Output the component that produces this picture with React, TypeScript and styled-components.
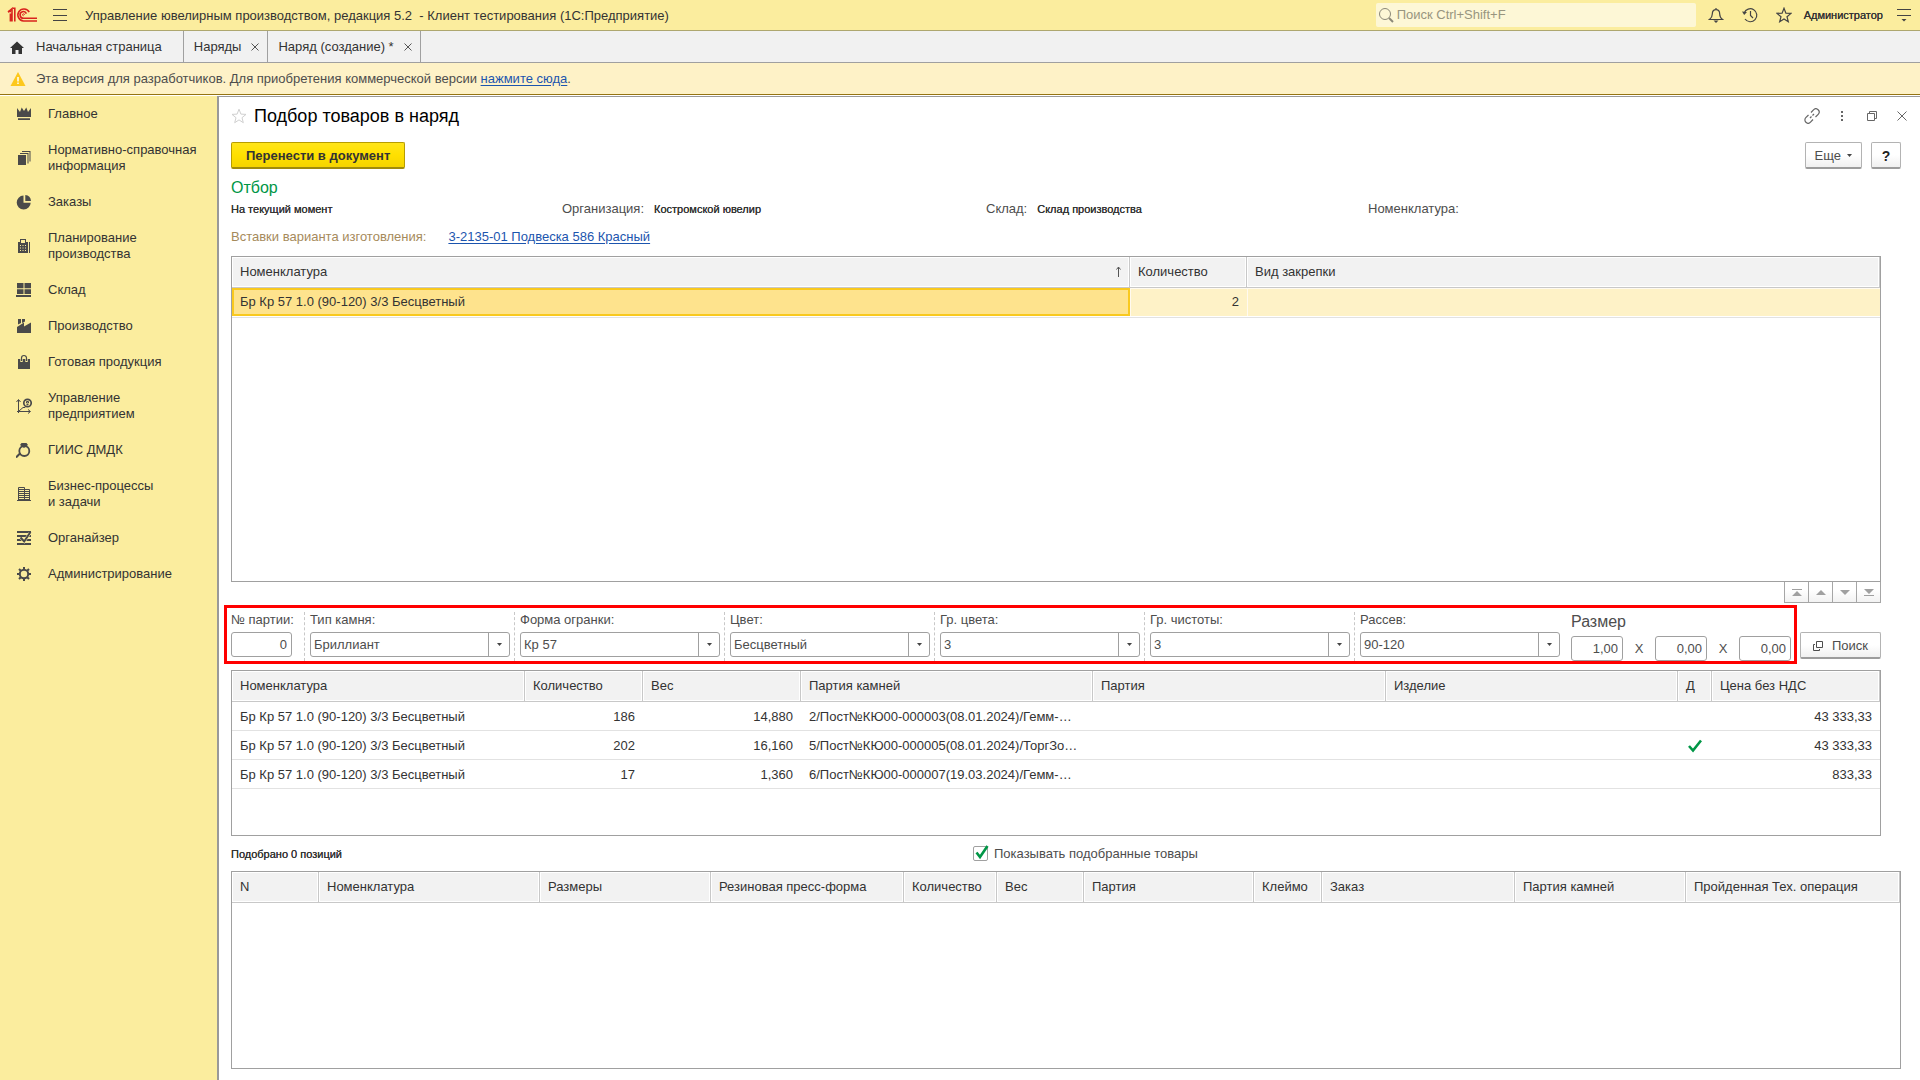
import React, { useId, useState } from 'react';
import styled, { createGlobalStyle } from 'styled-components';

const GlobalStyle = createGlobalStyle`
  *, *::before, *::after { box-sizing: border-box; }
  body { margin: 0; background: #fff; }
  body, button, input, select {
    font-family: "Liberation Sans", Arial, sans-serif;
    font-size: 13px;
    line-height: 16px;
    color: #333;
  }
  button { margin: 0; padding: 0; border: 0; background: none; cursor: pointer; }
`;

const Page = styled.div`
  display: flex;
  flex-direction: column;
  min-height: 100vh;
`;

const Row = styled.div<{ $gap?: number }>`
  display: flex;
  align-items: center;
  gap: ${(p) => p.$gap ?? 0}px;
`;

/* ---------- top bars ---------- */

const TopBar = styled.header`
  display: flex;
  align-items: center;
  height: 31px;
  padding: 0 8px 0 7px;
  background: #fbed9e;
  border-bottom: 1px solid #aea76f;
`;

const AppTitle = styled.div`
  flex: 1;
  margin-left: 17px;
  padding-top: 2px;
  white-space: pre;
`;

const IconButton = styled.button`
  display: flex;
  align-items: center;
  justify-content: center;
  width: 16px;
  height: 16px;
  color: #444;
`;

const SearchBox = styled.label`
  display: flex;
  align-items: center;
  gap: 3px;
  width: 320px;
  height: 24px;
  padding: 0 2px;
  margin-right: 12px;
  border-radius: 2px;
  background: #fdf7d6;
  color: #8b8878;
`;

const SearchInput = styled.input`
  flex: 1;
  min-width: 0;
  padding: 0;
  border: 0;
  outline: 0;
  background: none;
  &::placeholder { color: #98957f; opacity: 1; }
`;

const UserName = styled.button`
  margin: 0 13px 0 12px;
  font-size: 11px;
  text-shadow: 0 0 0 currentColor;
`;

const TabBar = styled.nav`
  display: flex;
  height: 32px;
  background: #f1f1f1;
  border-bottom: 1px solid #a0a0a0;
`;

const Tab = styled.div<{ $home?: boolean }>`
  display: flex;
  align-items: center;
  gap: ${(p) => (p.$home ? 12 : 10)}px;
  padding: ${(p) => (p.$home ? '0 21px 0 10px' : '0 8px 0 10px')};
  border-right: 1px solid #a0a0a0;
`;

const TabClose = styled.button`
  display: flex;
  width: 8px;
  color: #555;
`;

const Banner = styled.div`
  display: flex;
  align-items: center;
  gap: 10px;
  height: 32px;
  padding: 0 10px;
  background: #fef2c7;
  border-bottom: 1px solid #957412;
  color: #4d4d4d;
`;

const Link = styled.a`
  color: #1c55ae;
  text-decoration: underline;
  text-underline-offset: 2px;
`;

/* ---------- body ---------- */

const Body = styled.div`
  display: flex;
  flex: 1;
  padding-top: 1px;
`;

const Sidebar = styled.nav`
  width: 217px;
  flex: none;
  background: #fbed9e;
`;

const SideItem = styled.button`
  display: flex;
  align-items: center;
  gap: 16px;
  width: 100%;
  padding: 10px 8px 10px 16px;
  text-align: left;
  white-space: pre-line;
  & svg { flex: none; color: #4a4a4a; }
`;

const Main = styled.main`
  display: flex;
  flex: 1;
  flex-direction: column;
  min-width: 0;
  padding: 0 19px 11px 12px;
  border-top: 1px solid #999;
  border-left: 2px solid #999;
`;

const TitleRow = styled.div`
  display: flex;
  align-items: center;
  height: 38px;
`;

const Title = styled.h1`
  flex: 1;
  margin: 0 0 0 7px;
  font-size: 18px;
  line-height: 22px;
  font-weight: 400;
  color: #000;
`;

const WindowTools = styled.div`
  display: flex;
  gap: 14px;
  margin-right: -9px;
  & button { color: #666; }
`;

const CommandBar = styled.div`
  display: flex;
  gap: 9px;
  margin-top: 7px;
`;

const Button = styled.button<{ $primary?: boolean }>`
  display: flex;
  align-items: center;
  justify-content: center;
  gap: 6px;
  height: 27px;
  padding: ${(p) => (p.$primary ? '1px 14px 0' : '1px 9px 0')};
  border: 1px solid ${(p) => (p.$primary ? '#b79d00' : '#b3b3b3')};
  border-bottom: 2px solid ${(p) => (p.$primary ? '#a08b0c' : '#9c9c9c')};
  border-radius: 2px;
  background: ${(p) =>
    p.$primary
      ? 'linear-gradient(#ffe51a, #ffe000 50%, #f5d400)'
      : 'linear-gradient(#fff 50%, #f0f0f0)'};
  color: ${(p) => (p.$primary ? '#333' : '#4d4d4d')};
  font-weight: ${(p) => (p.$primary ? 700 : 400)};
`;

const HelpButton = styled(Button)`
  width: 30px;
  padding: 1px 0 0;
  font-weight: 700;
  font-size: 14px;
  color: #222;
`;

const Spacer = styled.div`
  flex: 1;
`;

const SectionTitle = styled.h2`
  margin: 9px 0 3px;
  font-size: 16px;
  line-height: 20px;
  font-weight: 400;
  color: #009646;
`;

const Facts = styled.dl`
  display: grid;
  grid-template-columns: 331fr 424fr 382fr 533fr;
  margin: 0;
  color: #4d4d4d;
`;

const Fact = styled.div`
  display: flex;
  gap: 10px;
  & dt, & dd { margin: 0; }
`;

const Strong = styled.span`
  font-size: 11px;
  color: #333;
  text-shadow: 0 0 0 currentColor;
`;

const VariantRow = styled.div`
  display: flex;
  gap: 22px;
  margin: 12px 0 11px;
  color: #a68a5b;
`;

/* ---------- tables ---------- */

const TablePanel = styled.div<{ $size: number; $wide?: boolean }>`
  flex: ${(p) => p.$size} 0 ${(p) => p.$size}px;
  margin-right: ${(p) => (p.$wide ? 0 : 20)}px;
  border: 1px solid #a0a0a0;
  overflow: hidden;
`;

const Table = styled.table`
  width: 100%;
  table-layout: fixed;
  border-collapse: separate;
  border-spacing: 0;
`;

const Th = styled.th`
  height: 31px;
  padding: 0 8px;
  border-right: 1px solid #c8c8c8;
  border-bottom: 1px solid #c8c8c8;
  background: #f2f2f2;
  box-shadow: inset 0 0 0 1px #fff;
  font-weight: 400;
  text-align: left;
  white-space: nowrap;
`;

const HeadLabel = styled.div`
  display: flex;
  justify-content: space-between;
  align-items: center;
`;

const Td = styled.td<{ $right?: boolean; $tone?: 'row' | 'cell' }>`
  height: ${(p) => (p.$tone ? 28 : 29)}px;
  padding: ${(p) => (p.$tone === 'cell' ? '0 6px' : p.$tone ? '0 8px' : '1px 8px 0')};
  border: ${(p) => (p.$tone === 'cell' ? '2px solid #f9c91f' : '0')};
  border-bottom: ${(p) => (p.$tone === 'cell' ? '2px solid #f9c91f' : p.$tone ? '0' : '1px solid #e2e2e2')};
  background: ${(p) => (p.$tone === 'cell' ? '#fee38d' : p.$tone ? '#fef2c7' : 'none')};
  box-shadow: ${(p) => (p.$tone === 'row' ? 'inset 1px 1px 0 #fffaf0' : 'none')};
  text-align: ${(p) => (p.$right ? 'right' : 'left')};
  white-space: nowrap;
  overflow: hidden;
  & svg { display: block; margin: 0 auto; }
`;

const RowRule = styled.tr`
  & td { height: 2px; padding: 0; border-bottom: 1px solid #e2e2e2; }
`;

const Pager = styled.div`
  display: flex;
  justify-content: flex-end;
  margin: 0 20px 2px 0;
`;

const PagerButton = styled.button`
  display: flex;
  align-items: center;
  justify-content: center;
  width: 25px;
  height: 21px;
  margin-left: -1px;
  border: 1px solid #a6a6a6;
  border-top: 0;
  background: linear-gradient(#fff 40%, #f2f2f2);
  color: #a0a0a0;
`;

/* ---------- stone filter ---------- */

const FilterRow = styled.div`
  display: flex;
  align-items: flex-start;
  gap: 3px;
  margin: 0 20px 6px -7px;
`;

const FilterFrame = styled.div`
  display: flex;
  flex: 1;
  min-width: 0;
  padding: 4px 3px 0 4px;
  border: 3px solid #f00;
  color: #4d4d4d;
`;

const Field = styled.div<{ $fixed?: boolean }>`
  display: flex;
  flex-direction: column;
  gap: 4px;
  flex: ${(p) => (p.$fixed ? '0 0 73px' : '1 1 0')};
  min-width: 0;
  padding: ${(p) => (p.$fixed ? '0 12px 4px 0' : '0 4px 4px 5px')};
  border-left: ${(p) => (p.$fixed ? '0' : '1px dashed #c8c8c8')};
  white-space: nowrap;
`;

const TextInput = styled.input`
  width: 100%;
  height: 25px;
  padding: 0 4px;
  border: 1px solid #a0a0a0;
  border-radius: 3px;
  outline: 0;
  color: #4d4d4d;
  text-align: right;
`;

const SelectShell = styled.div`
  display: grid;
  & > * { grid-area: 1 / 1; }
`;

const Select = styled.select`
  appearance: none;
  width: 100%;
  height: 25px;
  padding: 0 24px 0 3px;
  border: 1px solid #a0a0a0;
  border-radius: 3px;
  outline: 0;
  background: #fff;
  color: #4d4d4d;
`;

const SelectArrow = styled.span`
  display: flex;
  align-items: center;
  justify-content: center;
  justify-self: end;
  width: 22px;
  border-left: 1px solid #a0a0a0;
  pointer-events: none;
`;

const SizeGroup = styled.fieldset`
  display: flex;
  flex-direction: column;
  gap: 4px;
  width: 220px;
  margin: 0 0 0 7px;
  padding: 0;
  border: 0;
`;

const SizeTitle = styled.span`
  font-size: 16px;
  line-height: 20px;
`;

const SizeInputs = styled.div`
  display: grid;
  grid-template-columns: 52px 32px 52px 32px 52px;
  align-items: center;
  justify-items: center;
`;

const SearchButton = styled(Button)`
  gap: 9px;
  width: 81px;
  margin-top: 27px;
`;

/* ---------- footer of the picker ---------- */

const PickedRow = styled.div`
  display: grid;
  grid-template-columns: 742fr 928fr;
  align-items: center;
  height: 35px;
`;

const CheckLabel = styled.label`
  display: flex;
  align-items: center;
  gap: 6px;
  color: #4d4d4d;
`;

const CheckShell = styled.span`
  display: grid;
  width: 15px;
  & > * { grid-area: 1 / 1; }
  & svg { overflow: visible; pointer-events: none; }
`;

const Checkbox = styled.input`
  appearance: none;
  width: 15px;
  height: 15px;
  margin: 0;
  border: 1px solid #a0a0a0;
  border-radius: 2px;
  background: #fff;
`;

/* ---------- drawings ---------- */

const Svg = ({ size = 16, line, children }: { size?: number; line?: number; children: React.ReactNode }) => (
  <svg
    width={size}
    height={size}
    viewBox={`0 0 ${size} ${size}`}
    fill={line ? 'none' : 'currentColor'}
    stroke={line ? 'currentColor' : 'none'}
    strokeWidth={line}
    aria-hidden="true"
  >
    {children}
  </svg>
);

const Logo = () => (
  <svg width="31" height="16" viewBox="0 0 31 16" fill="none" stroke="#d9231d" strokeWidth="1.6" aria-hidden="true">
    <path d="M1 5.2 5 1.8v12.7M3.4 6.5v8" />
    <path d="M5.6 1.2h2.2v13.4M1 4.5h3" />
    <path d="M22.2 5.2A6 6 0 1 0 16.5 14H30" />
    <path d="M19.4 6.6A3.3 3.3 0 1 0 16.6 11.2H30" />
    <path d="M17.6 7.7a1 1 0 1 0-1 1.1" strokeWidth="1" />
  </svg>
);

const StarPath = 'M8 1.2l1.9 4.9 5.1.3-4 3.3 1.3 5L8 11.9l-4.3 2.8 1.3-5-4-3.3 5.1-.3z';

const Cross = ({ size }: { size: number }) => (
  <Svg size={size} line={1}>
    <path d={`M.5.5l${size - 1} ${size - 1}M${size - 0.5}.5L.5 ${size - 0.5}`} />
  </Svg>
);

const Check = () => (
  <svg width="14" height="14" viewBox="0 0 14 14" fill="none" stroke="#009646" strokeWidth="2.6" aria-hidden="true">
    <path d="M1 7l4 4.5L13 1.500" />
  </svg>
);

const Caret = () => (
  <svg width="5" height="3" viewBox="0 0 5 3" fill="#444" aria-hidden="true">
    <path d="M0 0h5L2.5 3z" />
  </svg>
);

const Windows = () => (
  <Svg size={10} line={1}>
    <path d="M3.5 .5h6v6h-6zM2 3.5H.5v6h6V8" />
  </Svg>
);

const icons: Record<string, React.ReactNode> = {
  crown: (
    <Svg><path d="M1 2l3 4L5.700 1.500 8 5l2.300-3.500L12 6l3-4v9H1zM2 12.300h12V14H2z" /></Svg>
  ),
  docs: (
    <Svg><path d="M2 5h8v10H2zM4 3h8.500v10.500h-1V4H4zM6 1h8.500v10.500h-1V2H6z" /></Svg>
  ),
  pie: (
    <Svg><path d="M7.500 1.500v7.200h7.200A7 7 0 1 1 7.500 1.500zM9.300 1a6.500 6.500 0 0 1 5.700 5.900H9.300z" /></Svg>
  ),
  calc: (
    <Svg>
      <path fillRule="evenodd" d="M4 1h6v3h2v11H2V4h2zM5 2v3h4V2zM4 7v1h1V7zM6.500 7v1h1V7zM9 7v1h1V7zM4 9.500v1h1v-1zM6.500 9.500v1h1v-1zM9 9.500v1h1v-1zM4 12v1h1v-1zM6.500 12v1h1v-1zM9 12v1h1v-1zM13 4h1v11h-1z" />
    </Svg>
  ),
  store: (
    <Svg><path d="M1 1h6.500v5.300H1zM8.500 1H15v5.300H8.500zM1 7.300h6.500v4.700H1zM8.500 7.300H15v4.700H8.500zM0 13h15v2H0z" /></Svg>
  ),
  factory: (
    <Svg><path d="M2 1h3v4L2 6.500zM6 1h3v2.500L6 5zM1 15V9l7-4.500V8.500L15 4.500V15z" /></Svg>
  ),
  bag: (
    <Svg>
      <path d="M2 5h12v10H2z" />
      <path d="M5.500 8V4a2.500 2.500 0 0 1 5 0v4" fill="none" stroke="#fbed9e" strokeWidth="2.400" />
      <path d="M5.500 7V4a2.500 2.500 0 0 1 5 0v3" fill="none" stroke="currentColor" strokeWidth="1.200" />
    </Svg>
  ),
  chart: (
    <Svg line={1}>
      <path d="M2.500 15V2M.5 4l2-2.500 2 2.500M1 13.500h13M12 11.500l2.500 2-2.500 2M3 13l4-3.500 2 0 2-2" />
      <circle cx="11.500" cy="5" r="3.700" strokeWidth="1.700" />
      <path d="M10.500 3.500h2v1.500h-2zM10.500 6.500h2" />
    </Svg>
  ),
  ring: (
    <Svg>
      <path d="M5.500 1h5l1.500 2L8 6 4 3z" />
      <circle cx="8.300" cy="9" r="5" fill="none" stroke="currentColor" strokeWidth="1.800" />
      <path d="M0 15.500l4.500-4.500" stroke="currentColor" strokeWidth="2" />
    </Svg>
  ),
  building: (
    <Svg line={1}>
      <path d="M2.500 14V1.500h6V14M9 3.500h4.500V14M1 14.500h14" />
      <path d="M3 3.500h5M3 5.500h5M3 7.500h5M3 9.500h5M3 11.500h5M3 13.500h5M9 5.500h4M9 7.500h4M9 9.500h4M9 11.500h4M9 13.500h4" />
    </Svg>
  ),
  lines: (
    <Svg>
      <path d="M1 1h14v2H1zM1 5h14v2H1zM1 9h14v2H1zM1 13h14v2H1z" />
      <path d="M5 8l3.200 3.300L14 3" fill="none" stroke="#fbed9e" strokeWidth="3" />
      <path d="M4.500 7.500l3.700 4L14.500 2" fill="none" stroke="currentColor" strokeWidth="2" />
    </Svg>
  ),
  gear: (
    <Svg line={2}>
      <circle cx="8" cy="8" r="4.200" />
      <path d="M8 1v2.500M8 12.500V15M1 8h2.500M12.500 8H15M3 3l1.800 1.800M11.200 11.200L13 13M13 3l-1.800 1.800M4.800 11.200L3 13" />
    </Svg>
  ),
};

/* ---------- data ---------- */

const sections: [string, string][] = [
  ['crown', 'Главное'],
  ['docs', 'Нормативно-справочная\nинформация'],
  ['pie', 'Заказы'],
  ['calc', 'Планирование\nпроизводства'],
  ['store', 'Склад'],
  ['factory', 'Производство'],
  ['bag', 'Готовая продукция'],
  ['chart', 'Управление\nпредприятием'],
  ['ring', 'ГИИС ДМДК'],
  ['building', 'Бизнес-процессы\nи задачи'],
  ['lines', 'Органайзер'],
  ['gear', 'Администрирование'],
];

const filters: [string, string][] = [
  ['Тип камня:', 'Бриллиант'],
  ['Форма огранки:', 'Кр 57'],
  ['Цвет:', 'Бесцветный'],
  ['Гр. цвета:', '3'],
  ['Гр. чистоты:', '3'],
  ['Рассев:', '90-120'],
];

type Column = [string, number];

const insertColumns: Column[] = [['Номенклатура', 898], ['Количество', 117], ['Вид закрепки', 633]];

const stockColumns: Column[] = [
  ['Номенклатура', 293], ['Количество', 118], ['Вес', 158], ['Партия камней', 292],
  ['Партия', 293], ['Изделие', 292], ['Д', 34], ['Цена без НДС', 168],
];

const pickedColumns: Column[] = [
  ['N', 87], ['Номенклатура', 221], ['Размеры', 171], ['Резиновая пресс-форма', 193],
  ['Количество', 93], ['Вес', 87], ['Партия', 170], ['Клеймо', 68], ['Заказ', 193],
  ['Партия камней', 171], ['Пройденная Тех. операция', 214],
];

const STONE = 'Бр Кр 57 1.0 (90-120) 3/3 Бесцветный';

const stock = [
  { qty: '186', weight: '14,880', lot: '2/Пост№КЮ00-000003(08.01.2024)/Гемм-…', ok: false, price: '43 333,33' },
  { qty: '202', weight: '16,160', lot: '5/Пост№КЮ00-000005(08.01.2024)/ТоргЗо…', ok: true, price: '43 333,33' },
  { qty: '17', weight: '1,360', lot: '6/Пост№КЮ00-000007(19.03.2024)/Гемм-…', ok: false, price: '833,33' },
];

/* ---------- parts ---------- */

const TableHead = ({ columns, sorted }: { columns: Column[]; sorted?: boolean }) => (
  <>
    <colgroup>
      {columns.map(([name, width]) => <col key={name} width={width} />)}
    </colgroup>
    <thead>
      <tr>
        {columns.map(([name], i) => (
          <Th key={name} scope="col">
            <HeadLabel>
              {name}
              {sorted && i === 0 && (
                <svg width="5" height="12" viewBox="0 0 5 12" fill="none" stroke="#555" aria-hidden="true">
                  <path d="M2.500 11V1M.5 3.500l2-2.500 2 2.500" />
                </svg>
              )}
            </HeadLabel>
          </Th>
        ))}
      </tr>
    </thead>
  </>
);

const FilterSelect = ({ label, value }: { label: string; value: string }) => {
  const id = useId();
  return (
    <Field>
      <label htmlFor={id}>{label}</label>
      <SelectShell>
        <Select id={id} defaultValue={value}>
          <option>{value}</option>
        </Select>
        <SelectArrow><Caret /></SelectArrow>
      </SelectShell>
    </Field>
  );
};

const pagerShapes: [string, string][] = [
  ['В начало', 'M0 0h10v1H0zM5 2l5 5H0z'],
  ['Вверх', 'M5 1l5 5H0z'],
  ['Вниз', 'M0 1h10L5 6z'],
  ['В конец', 'M0 0h10L5 5zM0 6h10v1H0z'],
];

export default function App() {
  const [showPicked, setShowPicked] = useState(true);

  return (
    <Page>
      <GlobalStyle />
      <TopBar>
        <Row $gap={14}>
          <Logo />
          <IconButton aria-label="Меню">
            <Svg line={1}><path d="M1 2.500h14M1 8.500h14M1 13.500h14" /></Svg>
          </IconButton>
        </Row>
        <AppTitle>{'Управление ювелирным производством, редакция 5.2  - Клиент тестирования (1С:Предприятие)'}</AppTitle>
        <SearchBox>
          <Svg line={1}><circle cx="7" cy="7" r="5.500" /><path d="M11 11l4 4" strokeWidth="2" /></Svg>
          <SearchInput type="search" placeholder="Поиск Ctrl+Shift+F" aria-label="Поиск" />
        </SearchBox>
        <Row $gap={18}>
          <IconButton aria-label="Уведомления">
            <Svg line={1.2}>
              <path d="M1.500 12.500h13c-2-1.500-2.800-3-2.800-5.500 0-2.500-1.200-4.300-3.700-4.300S4.300 4.500 4.300 7c0 2.500-.8 4-2.800 5.500zM8 1v1.500" />
              <path d="M5.500 13.500h5L8 16z" fill="currentColor" stroke="none" />
            </Svg>
          </IconButton>
          <IconButton aria-label="История">
            <Svg line={1.2}>
              <path d="M2.200 6A6.500 6.500 0 1 1 3 12M8.500 4v4.500l2.500 2.500" />
              <path d="M0 4.500l5 .5-2.800 3z" fill="currentColor" stroke="none" />
            </Svg>
          </IconButton>
          <IconButton aria-label="Избранное">
            <Svg line={1.2}><path d={StarPath} /></Svg>
          </IconButton>
        </Row>
        <UserName>Администратор</UserName>
        <IconButton aria-label="Настройки">
          <Svg line={1}>
            <path d="M1 2.500h14M1 8.500h14" />
            <path d="M5.500 12h5L8 14.500z" fill="currentColor" stroke="none" />
          </Svg>
        </IconButton>
      </TopBar>

      <TabBar>
        <Tab $home>
          <Svg size={14}><path d="M7 1.500l7 6.500h-2v6H8.500v-4h-3v4H2V8H0z" /></Svg>
          <button>Начальная страница</button>
        </Tab>
        <Tab>
          <button>Наряды</button>
          <TabClose aria-label="Закрыть"><Cross size={8} /></TabClose>
        </Tab>
        <Tab>
          <button>Наряд (создание) *</button>
          <TabClose aria-label="Закрыть"><Cross size={8} /></TabClose>
        </Tab>
      </TabBar>

      <Banner>
        <svg width="16" height="14" viewBox="0 0 16 14" aria-hidden="true">
          <path d="M8 0l7.500 14H.5z" fill="#fdc81c" />
          <path d="M8 5v4.500M8 10.500v1.500" stroke="#fff" strokeWidth="1.500" />
        </svg>
        <span>
          Эта версия для разработчиков. Для приобретения коммерческой версии <Link href="#buy">нажмите сюда</Link>.
        </span>
      </Banner>

      <Body>
        <Sidebar>
          {sections.map(([icon, name]) => (
            <SideItem key={name}>{icons[icon]}{name}</SideItem>
          ))}
        </Sidebar>

        <Main>
          <TitleRow>
            <IconButton aria-label="В избранное">
              <svg width="16" height="16" viewBox="0 0 16 16" fill="none" stroke="#d0d0d0" aria-hidden="true">
                <path d={StarPath} />
              </svg>
            </IconButton>
            <Title>Подбор товаров в наряд</Title>
            <WindowTools>
              <IconButton aria-label="Ссылка">
                <Svg line={1.2}>
                  <path d="M7 4.500l2.500-2.700a3.200 3.200 0 0 1 4.700 4.500L11.500 9M9 11.500l-2.500 2.700a3.200 3.200 0 0 1-4.700-4.500L4.500 7M6 10l1.500-1.500M8.500 7.500L10 6" />
                </Svg>
              </IconButton>
              <IconButton aria-label="Еще действия">
                <Svg><path d="M7 3h2v2H7zM7 7h2v2H7zM7 11h2v2H7z" /></Svg>
              </IconButton>
              <IconButton aria-label="Развернуть">
                <Svg line={1}><path d="M3.500 5.500h7v7h-7zM5.500 5V3.500h7v7H11" /></Svg>
              </IconButton>
              <IconButton aria-label="Закрыть"><Cross size={10} /></IconButton>
            </WindowTools>
          </TitleRow>

          <CommandBar>
            <Button $primary>Перенести в документ</Button>
            <Spacer />
            <Button>Еще <Caret /></Button>
            <HelpButton>?</HelpButton>
          </CommandBar>

          <SectionTitle>Отбор</SectionTitle>
          <Facts>
            <Fact><dt><Strong>На текущий момент</Strong></dt></Fact>
            <Fact><dt>Организация:</dt><dd><Strong>Костромской ювелир</Strong></dd></Fact>
            <Fact><dt>Склад:</dt><dd><Strong>Склад производства</Strong></dd></Fact>
            <Fact><dt>Номенклатура:</dt></Fact>
          </Facts>
          <VariantRow>
            <span>Вставки варианта изготовления:</span>
            <Link href="#variant">3-2135-01 Подвеска 586 Красный</Link>
          </VariantRow>

          <TablePanel $size={326}>
            <Table>
              <TableHead columns={insertColumns} sorted />
              <tbody>
                <tr>
                  <Td $tone="cell">{STONE}</Td>
                  <Td $tone="row" $right>2</Td>
                  <Td $tone="row" />
                </tr>
                <RowRule><td colSpan={3} /></RowRule>
              </tbody>
            </Table>
          </TablePanel>
          <Pager>
            {pagerShapes.map(([name, shape]) => (
              <PagerButton key={name} aria-label={name}>
                <svg width="10" height="7" viewBox="0 0 10 7" fill="currentColor" aria-hidden="true"><path d={shape} /></svg>
              </PagerButton>
            ))}
          </Pager>

          <FilterRow>
            <FilterFrame>
              <Field $fixed>
                <label htmlFor="lot">№ партии:</label>
                <TextInput id="lot" defaultValue="0" />
              </Field>
              {filters.map(([label, value]) => <FilterSelect key={label} label={label} value={value} />)}
              <SizeGroup aria-labelledby="size-title">
                <SizeTitle id="size-title">Размер</SizeTitle>
                <SizeInputs>
                  <TextInput aria-label="Длина" defaultValue="1,00" />
                  <span>X</span>
                  <TextInput aria-label="Ширина" defaultValue="0,00" />
                  <span>X</span>
                  <TextInput aria-label="Высота" defaultValue="0,00" />
                </SizeInputs>
              </SizeGroup>
            </FilterFrame>
            <SearchButton><Windows />Поиск</SearchButton>
          </FilterRow>

          <TablePanel $size={166}>
            <Table>
              <TableHead columns={stockColumns} />
              <tbody>
                {stock.map((row) => (
                  <tr key={row.lot}>
                    <Td>{STONE}</Td>
                    <Td $right>{row.qty}</Td>
                    <Td $right>{row.weight}</Td>
                    <Td>{row.lot}</Td>
                    <Td />
                    <Td />
                    <Td>{row.ok && <Check />}</Td>
                    <Td $right>{row.price}</Td>
                  </tr>
                ))}
              </tbody>
            </Table>
          </TablePanel>

          <PickedRow>
            <Strong>Подобрано 0 позиций</Strong>
            <CheckLabel>
              <CheckShell>
                <Checkbox type="checkbox" checked={showPicked} onChange={(e) => setShowPicked(e.target.checked)} />
                {showPicked && (
                  <svg width="15" height="15" viewBox="0 0 15 15" fill="none" stroke="#009646" strokeWidth="2.600" aria-hidden="true">
                    <path d="M3.500 6.500l3.500 4.500L14.500 0" />
                  </svg>
                )}
              </CheckShell>
              Показывать подобранные товары
            </CheckLabel>
          </PickedRow>

          <TablePanel $size={198} $wide>
            <Table>
              <TableHead columns={pickedColumns} />
            </Table>
          </TablePanel>
        </Main>
      </Body>
    </Page>
  );
}
